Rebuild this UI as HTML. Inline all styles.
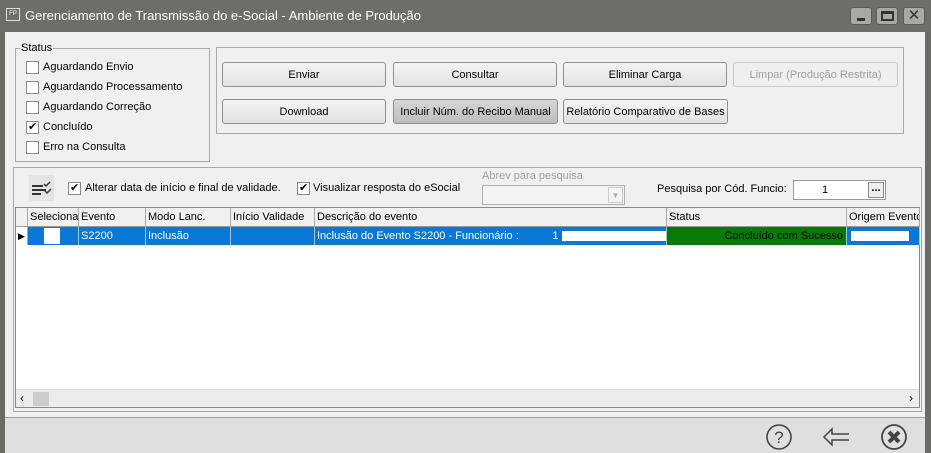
<!DOCTYPE html>
<html><head><meta charset="utf-8"><style>
*{box-sizing:border-box;margin:0;padding:0}
body{width:931px;height:453px;overflow:hidden;background:#6b6c68;font-family:"Liberation Sans","DejaVu Sans",sans-serif;font-size:11px;color:#000;position:relative}
.abs{position:absolute}
.title{left:0;top:0;width:931px;height:32px;background:#6d6e69}
.title .t{left:25px;top:8px;color:#fff;font-size:13px}
.fp{left:6px;top:8px;width:14px;height:13px;border:1px solid #ddd;color:#fff;font-size:6px;line-height:11px;text-align:center}
.wb{top:7px;width:22px;height:18px;background:#a8a8a5;border-radius:3px;border:1px solid #5a5a57}
.client{left:5px;top:32px;width:920px;height:421px;background:#f0f0f0}
.footer{left:5px;top:417px;width:920px;height:36px;background:#dfdfdf;border-top:1px solid #a0a0a0}
.grp{border:1px solid #aaa}
.cb{width:13px;height:13px;border:1px solid #8a8a8a;background:#fff}
.chk::after{content:"✔";position:absolute;left:1px;top:-2px;font-size:11px}
.btn{height:25px;border:1px solid #8e8e8e;border-radius:3px;background:linear-gradient(#f4f4f4,#e2e2e2);text-align:center;line-height:25px;font-size:11px}
.grid{left:15px;top:207px;width:905px;height:201px;background:#fff;border:1px solid #888}
.hd{top:0;height:19px;background:#f0f0f0;border-right:1px solid #aaa;border-bottom:1px solid #999;padding-left:2px;line-height:19px}
.rw{top:19px;height:18px;line-height:18px;color:#fff;padding-left:2px;border-right:1px solid #9cc}
</style></head><body>
<div class="abs title"><div class="abs fp">FP</div><div class="abs t">Gerenciamento de Transmissão do e-Social - Ambiente de Produção</div>
<div class="abs wb" style="left:850px"><div class="abs" style="left:6px;top:10px;width:8px;height:3px;background:#333"></div></div>
<div class="abs wb" style="left:876px"><div class="abs" style="left:4px;top:3px;width:13px;height:10px;border:2px solid #333;border-top-width:3px"></div></div>
<div class="abs wb" style="left:903px;color:#333;font-weight:bold;font-size:15px;text-align:center;line-height:16px">✕</div>
</div>
<div class="abs client"></div>
<div class="abs footer"></div>
<div class="abs grp" style="left:15px;top:48px;width:195px;height:114px"></div>
<div class="abs" style="left:20px;top:42px;background:#f0f0f0;padding:0 1px">Status</div>
<div class="abs cb" style="left:26px;top:61px"></div><div class="abs" style="left:43px;top:61px">Aguardando Envio</div>
<div class="abs cb" style="left:26px;top:81px"></div><div class="abs" style="left:43px;top:81px">Aguardando Processamento</div>
<div class="abs cb" style="left:26px;top:101px"></div><div class="abs" style="left:43px;top:101px">Aguardando Correção</div>
<div class="abs cb chk" style="left:26px;top:121px"></div><div class="abs" style="left:43px;top:121px">Concluído</div>
<div class="abs cb" style="left:26px;top:141px"></div><div class="abs" style="left:43px;top:141px">Erro na Consulta</div>
<div class="abs grp" style="left:216px;top:47px;width:688px;height:87px"></div>
<div class="abs btn" style="left:222px;top:62px;width:164px">Enviar</div>
<div class="abs btn" style="left:393px;top:62px;width:164px">Consultar</div>
<div class="abs btn" style="left:563px;top:62px;width:164px">Eliminar Carga</div>
<div class="abs btn" style="left:733px;top:62px;width:165px;color:#a0a0a0;border-color:#c8c8c8;background:#efefef">Limpar (Produção Restrita)</div>
<div class="abs btn" style="left:222px;top:99px;width:164px">Download</div>
<div class="abs btn" style="left:393px;top:99px;width:165px;background:linear-gradient(#d6d6d6,#bdbdbd)">Incluir Núm. do Recibo Manual</div>
<div class="abs btn" style="left:563px;top:99px;width:165px">Relatório Comparativo de Bases</div>
<div class="abs grp" style="left:13px;top:167px;width:909px;height:245px"></div>
<div class="abs" style="left:29px;top:175px;width:25px;height:26px;background:#e4e4e4"><svg width="25" height="26"><g stroke="#333" stroke-width="2" fill="none"><path d="M3 11h11M3 15h14M3 19h9"/><path d="M15 9l2 2 4-4M16 16l2 2 4-4" stroke-width="1.5"/></g></svg></div>
<div class="abs cb chk" style="left:68px;top:182px"></div><div class="abs" style="left:85px;top:182px">Alterar data de início e final de validade.</div>
<div class="abs cb chk" style="left:297px;top:182px"></div><div class="abs" style="left:313px;top:182px">Visualizar resposta do eSocial</div>
<div class="abs" style="left:482px;top:170px;color:#a0a0a0">Abrev para pesquisa</div>
<div class="abs" style="left:482px;top:185px;width:143px;height:20px;border:1px solid #b0b0b0;background:#f4f4f4"><div class="abs" style="right:1px;top:1px;width:15px;height:16px;border:1px solid #ccc;color:#aaa;font-size:8px;text-align:center;line-height:16px">▼</div></div>
<div class="abs" style="left:657px;top:183px">Pesquisa por Cód. Funcio:</div>
<div class="abs" style="left:793px;top:180px;width:93px;height:20px;border:1px solid #999;background:#fff"><div class="abs" style="left:28px;top:3px">1</div><div class="abs" style="right:1px;top:1px;width:16px;height:16px;border:1px solid #888;background:#eee;font-weight:bold;text-align:center;line-height:10px">...</div></div>
<div class="abs grid">
<div class="abs hd" style="left:0;width:12px"></div>
<div class="abs hd" style="left:12px;width:51px">Seleciona</div>
<div class="abs hd" style="left:63px;width:67px">Evento</div>
<div class="abs hd" style="left:130px;width:85px">Modo Lanc.</div>
<div class="abs hd" style="left:215px;width:84px">Início Validade</div>
<div class="abs hd" style="left:299px;width:352px">Descrição do evento</div>
<div class="abs hd" style="left:651px;width:180px">Status</div>
<div class="abs hd" style="left:831px;width:73px;white-space:nowrap;overflow:hidden">Origem Evento</div>
<div class="abs" style="left:0;top:19px;width:12px;height:18px;background:#fff;border-right:1px solid #aaa;font-size:9px;line-height:18px;padding-left:2px">▶</div>
<div class="abs rw" style="left:12px;width:51px;background:#0a78d4"><div class="abs" style="left:16px;top:1px;width:16px;height:16px;background:#fff"></div></div>
<div class="abs rw" style="left:63px;width:67px;background:#0a78d4">S2200</div>
<div class="abs rw" style="left:130px;width:85px;background:#0a78d4">Inclusão</div>
<div class="abs rw" style="left:215px;width:84px;background:#0a78d4"></div>
<div class="abs rw" style="left:299px;width:352px;background:#0a78d4">Inclusão do Evento S2200 - Funcionário :&nbsp;&nbsp;&nbsp;&nbsp;&nbsp;&nbsp;&nbsp;&nbsp;&nbsp;&nbsp;&nbsp;1 (<div class="abs" style="left:247px;top:4px;width:104px;height:10px;background:#fff"></div></div>
<div class="abs rw" style="left:651px;width:180px;background:#087a08;color:#000;text-align:right;padding-right:3px">Concluído com Sucesso</div>
<div class="abs rw" style="left:831px;width:73px;background:#0a78d4"><div class="abs" style="left:4px;top:4px;width:58px;height:10px;background:#fff"></div></div>
<div class="abs" style="left:0;top:181px;width:903px;height:18px;background:#ececec;border-top:1px solid #ddd"><div class="abs" style="left:4px;top:1px;font-size:12px">‹</div><div class="abs" style="left:17px;top:2px;width:16px;height:14px;background:#cdcdcd"></div><div class="abs" style="right:6px;top:1px;font-size:12px">›</div></div>
</div>
<svg class="abs" style="left:765px;top:423px" width="28" height="28"><circle cx="14" cy="14" r="12" fill="none" stroke="#444" stroke-width="1.6"/><text x="14" y="20" text-anchor="middle" font-size="17" font-family="Liberation Sans" fill="#444">?</text></svg>
<svg class="abs" style="left:822px;top:425px" width="30" height="24"><path d="M27 9H10V4L2 12l8 8v-5h17" fill="none" stroke="#444" stroke-width="1.5"/></svg>
<svg class="abs" style="left:880px;top:423px" width="28" height="28"><circle cx="14" cy="14" r="12" fill="none" stroke="#444" stroke-width="1.8"/><path d="M9 9l10 10M19 9l-10 10" stroke="#444" stroke-width="4"/></svg>
</body></html>
